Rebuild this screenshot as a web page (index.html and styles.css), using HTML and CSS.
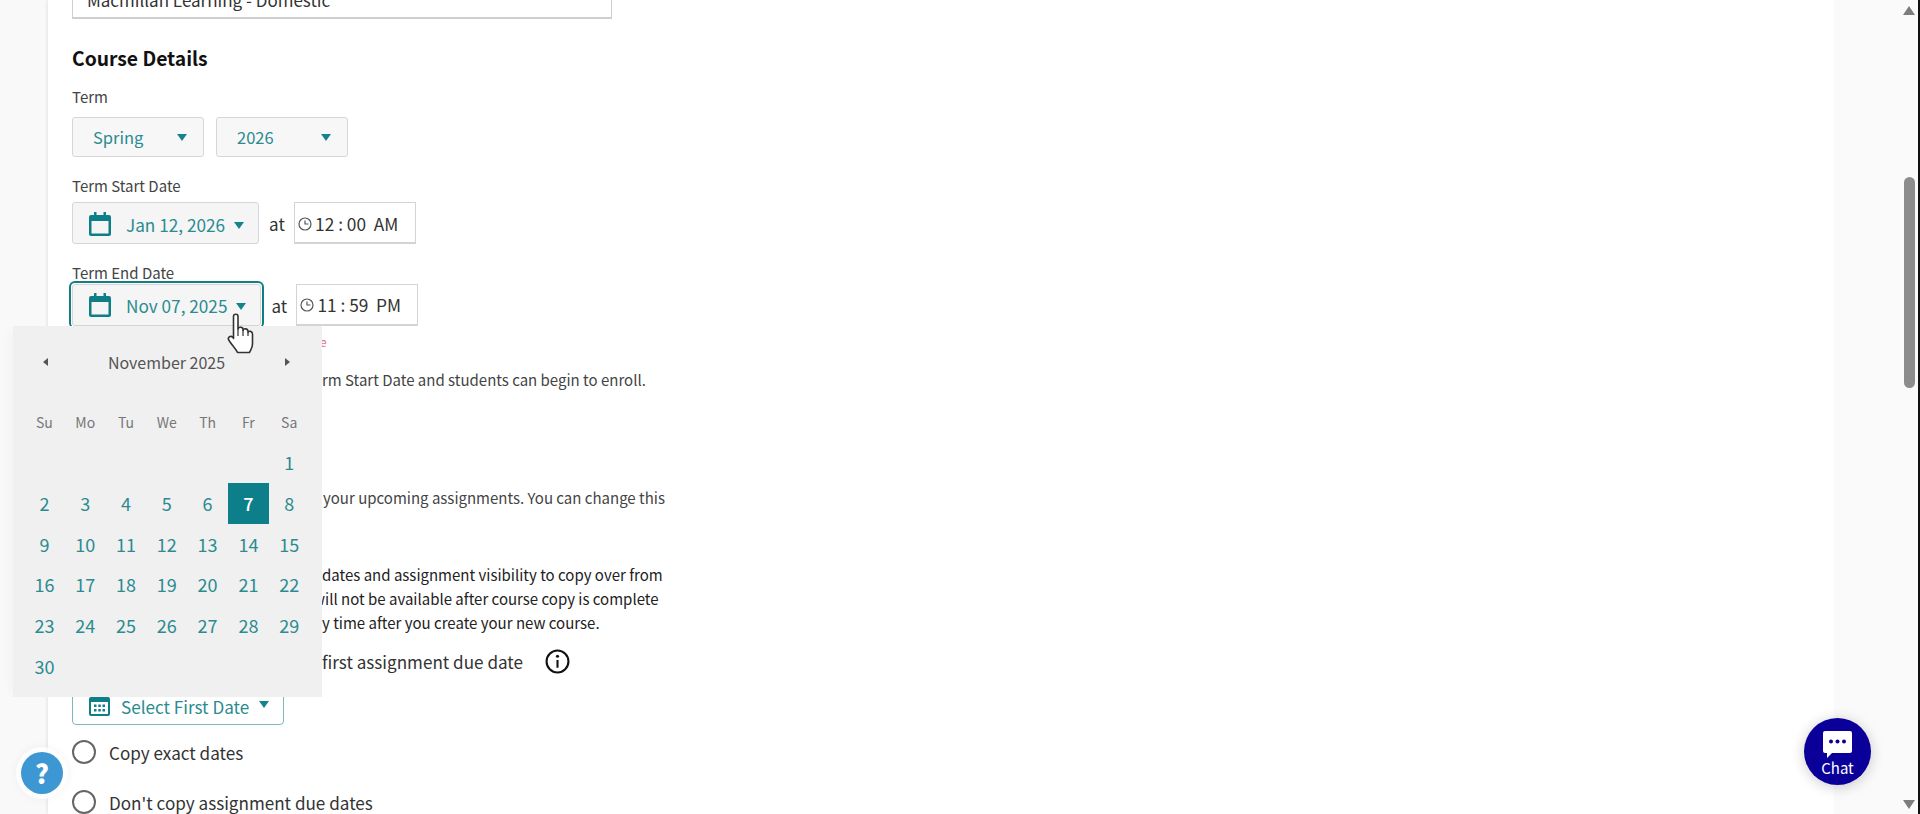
FILE: index.html
```html
<!DOCTYPE html>
<html lang="en">
<head>
    <meta charset="UTF-8">
    <meta name="viewport" content="width=device-width, initial-scale=1.0">
    <title>Create Course</title>
    <link rel="stylesheet" href="styles.css">
</head>
<body>
    <div class="page">
        <main class="panel">
            <div class="text-box">Macmillan Learning - Domestic</div>

            <h2 class="section-title">Course Details</h2>

            <div class="field-label term-label">Term</div>
            <div class="row">
                <button class="select-btn" type="button">Spring <span class="caret"></span></button>
                <button class="select-btn" type="button">2026 <span class="caret"></span></button>
            </div>

            <div class="field-label start-label">Term Start Date</div>
            <div class="row date-row start-row">
                <button class="date-btn" type="button">
                    <svg class="cal-icon" viewBox="0 0 22 24"><path d="M5 0h2.500v3h7V0H17v3h3a2 2 0 0 1 2 2v17a2 2 0 0 1-2 2H2a2 2 0 0 1-2-2V5a2 2 0 0 1 2-2h3zM2.500 9v12.500h17V9z"/></svg>
                    <span class="date-text">Jan 12, 2026</span>
                    <span class="caret"></span>
                </button>
                <span class="at">at</span>
                <div class="time-box">
                    <svg class="clock-icon" viewBox="0 0 14 14"><circle cx="7" cy="7" r="6"/><path d="M7 3.500V7h3.500"/></svg>
                    <span class="time-text">12 : 00&nbsp; AM</span>
                </div>
            </div>

            <div class="field-label end-label">Term End Date</div>
            <div class="row date-row">
                <button class="date-btn is-open" type="button">
                    <svg class="cal-icon" viewBox="0 0 22 24"><path d="M5 0h2.500v3h7V0H17v3h3a2 2 0 0 1 2 2v17a2 2 0 0 1-2 2H2a2 2 0 0 1-2-2V5a2 2 0 0 1 2-2h3zM2.500 9v12.500h17V9z"/></svg>
                    <span class="date-text">Nov 07, 2025</span>
                    <span class="caret"></span>
                </button>
                <span class="at">at</span>
                <div class="time-box">
                    <svg class="clock-icon" viewBox="0 0 14 14"><circle cx="7" cy="7" r="6"/><path d="M7 3.500V7h3.500"/></svg>
                    <span class="time-text">11 : 59&nbsp; PM</span>
                </div>
            </div>

            <!-- these lines run on under the open date picker, only the part right of it shows -->
            <p class="error-text">e</p>
            <p class="note enroll-note">rm Start Date and students can begin to enroll.</p>
            <p class="note reminder-note">your upcoming assignments. You can change this</p>

            <div class="copy-note">
                <p class="copy-line">dates and assignment visibility to copy over from</p>
                <p class="copy-line will-line">will not be available after course copy is complete</p>
                <p class="copy-line">y time after you create your new course.</p>
            </div>

            <div class="radio-row first-date-row">
                <span>first assignment due date</span>
                <svg class="info-icon" viewBox="0 0 24 24"><circle cx="12" cy="12" r="10.500"/><circle class="info-dot" cx="12" cy="7" r="1.500"/><path d="M12 10.500V18"/></svg>
            </div>
            <button class="first-date-btn" type="button">
                <svg class="grid-cal-icon" viewBox="0 0 21 19"><path d="M2 0h17a2 2 0 0 1 2 2v15a2 2 0 0 1-2 2H2a2 2 0 0 1-2-2V2a2 2 0 0 1 2-2zm0 5v12h17V5z"/><path d="M5 7.500h2.500V10H5zM9.300 7.500h2.500V10H9.300zM13.500 7.500H16V10h-2.500zM5 12h2.500v2.500H5zM9.300 12h2.500v2.500H9.300zM13.500 12H16v2.500h-2.500z"/></svg>
                <span>Select First Date</span>
                <span class="caret"></span>
            </button>
            <div class="radio-row exact-row"><span class="radio"></span><span>Copy exact dates</span></div>
            <div class="radio-row none-row"><span class="radio"></span><span>Don't copy assignment due dates</span></div>
        </main>

        <div class="scroll-rail">
            <span class="arrow-up"></span>
            <span class="thumb"></span>
            <span class="arrow-down"></span>
        </div>
    </div>

    <!-- date picker popup -->
    <div class="datepicker">
        <div class="dp-head">
            <span class="dp-prev"></span>
            <span class="dp-month">November 2025</span>
            <span class="dp-next"></span>
        </div>
        <div class="dp-grid dp-week">
            <span>Su</span><span>Mo</span><span>Tu</span><span>We</span><span>Th</span><span>Fr</span><span>Sa</span>
        </div>
        <div class="dp-grid dp-days">
            <span></span><span></span><span></span><span></span><span></span><span></span><span>1</span>
            <span>2</span><span>3</span><span>4</span><span>5</span><span>6</span><span class="dp-selected">7</span><span>8</span>
            <span>9</span><span>10</span><span>11</span><span>12</span><span>13</span><span>14</span><span>15</span>
            <span>16</span><span>17</span><span>18</span><span>19</span><span>20</span><span>21</span><span>22</span>
            <span>23</span><span>24</span><span>25</span><span>26</span><span>27</span><span>28</span><span>29</span>
            <span>30</span>
        </div>
    </div>

    <svg class="hand-cursor" viewBox="0 0 32 42">
        <path d="M8.500 3.500c0-3 4.500-3 4.500 0V16c.5-2.500 5-2.500 5 .5v1c.5-2.500 4.800-2.200 5 .8v1.200c.8-2 4.500-1.500 4.500 1.500V31c0 4-2 6-3 8.500H12.500C11 36 8 33.500 4 27.500c-2-3 1.500-5.500 4-3l.5 1z"/>
        <path class="hand-lines" d="M13 16v7M18 17.500V23M23 19.500V23"/>
    </svg>

    <button class="help-btn" type="button">?</button>

    <button class="chat-btn" type="button">
        <svg class="chat-icon" viewBox="0 0 29 27"><path d="M2 0h25a2 2 0 0 1 2 2v18a2 2 0 0 1-2 2H9l-5 5v-5H2a2 2 0 0 1-2-2V2a2 2 0 0 1 2-2z"/><circle cx="8" cy="10.500" r="2"/><circle cx="14.500" cy="10.500" r="2"/><circle cx="21" cy="10.500" r="2"/></svg>
        <span>Chat</span>
    </button>
</body>
</html>
```

FILE: styles.css
```css
* {
    box-sizing: border-box;
}
html, body {
    margin: 0;
    height: 100%;
    overflow: hidden;
}
body {
    background: #f9f9f9;
    color: #333;
    font-family: "Noto Sans CJK SC", "Source Sans Pro", "Noto Sans", sans-serif;
    font-size: 16px;
}
button {
    font-family: inherit;
}
.page {
    display: flex;
    height: 814px;
    padding-left: 48px;
}
.panel {
    width: 1786px;
    height: 814px;
    flex: none;
    background: #fff;
    padding: 0 0 0 24px;
    box-shadow: 0 0 4px #d8d8d8;
    overflow: hidden;
}
.text-box {
    width: 540px;
    height: 50px;
    margin-top: -31px;
    padding: 18px 14px 0;
    border: 1px solid #cfcfcf;
    border-bottom-width: 2px;
    font-size: 17px;
    line-height: 24px;
}
.section-title {
    margin: 26px 0 0;
    color: #111;
    font-size: 19.300px;
    font-weight: 700;
    line-height: 26px;
}
.field-label {
    color: #444;
    font-size: 15px;
    line-height: 20px;
}
.term-label {
    margin-top: 16px;
}
.start-label {
    margin-top: 19px;
}
.end-label {
    margin-top: 19px;
}
.row {
    display: flex;
    align-items: center;
}
.term-label + .row {
    gap: 12px;
    margin-top: 10px;
}
.date-row {
    margin-top: 6px;
}
.end-label + .date-row {
    margin-top: 1px;
}
.caret {
    display: inline-block;
    flex: none;
    width: 0;
    height: 0;
    border-left: 5.500px solid transparent;
    border-right: 5.500px solid transparent;
    border-top: 7px solid #14848c;
}
.select-btn {
    display: flex;
    align-items: center;
    justify-content: space-between;
    width: 132px;
    height: 40px;
    padding: 0 16px 0 20px;
    background: #f7f7f8;
    border: 1px solid #d6d6d8;
    border-radius: 3px;
    color: #2b8b90;
    font-size: 16.500px;
}
.date-btn {
    display: flex;
    align-items: center;
    height: 42px;
    padding: 0 14px 0 16px;
    background: #f5f5f6;
    border: 1px solid #d6d6d8;
    border-radius: 3px;
    color: #2b8b90;
    font-size: 17.200px;
}
.date-btn .caret {
    margin-top: 3px;
}
.start-row .date-btn,
.start-row .time-box {
    padding-top: 2px;
}
.date-btn.is-open {
    outline: 2px solid #0f7f87;
    outline-offset: 1px;
}
.cal-icon {
    flex: none;
    width: 22px;
    height: 24px;
    margin-right: 15px;
    fill: #0f7f87;
}
.date-text {
    margin-right: 9px;
    white-space: nowrap;
}
.at {
    width: 35px;
    padding-left: 10px;
    color: #333;
    font-size: 17px;
}
.time-box {
    display: flex;
    align-items: center;
    width: 122px;
    height: 42px;
    padding-left: 3px;
    background: #fff;
    border: 1px solid #d4d4d4;
    border-bottom-width: 2px;
}
.clock-icon {
    width: 14px;
    height: 14px;
    margin-right: 3px;
    fill: none;
    stroke: #555;
    stroke-width: 1.200;
}
.time-text {
    color: #333;
    font-size: 17.300px;
    white-space: nowrap;
}
.error-text {
    margin: 8px 0 0;
    padding-left: 248px;
    color: #dc6d92;
    font-size: 12px;
    line-height: 16px;
}
.note {
    margin: 0;
    padding-left: 250px;
    color: #444;
    font-size: 15px;
    line-height: 20px;
}
.enroll-note {
    margin-top: 20px;
}
.reminder-note {
    margin-top: 98px;
    padding-left: 251px;
}
.copy-note {
    margin-top: 55px;
    color: #222;
    font-size: 15px;
    line-height: 24px;
}
.copy-line {
    margin: 0;
    padding-left: 250px;
}
.copy-line.will-line {
    padding-left: 241px;
}
.radio-row {
    display: flex;
    align-items: center;
    height: 24px;
    color: #333;
    font-size: 17.100px;
}
.radio {
    flex: none;
    width: 24px;
    height: 24px;
    margin-right: 13px;
    background: #fff;
    border: 2px solid #666;
    border-radius: 50%;
}
.first-date-row {
    margin-top: 14px;
    padding-left: 250px;
}
.exact-row {
    margin-top: 15px;
}
.none-row {
    margin-top: 26px;
}
.info-icon {
    width: 25px;
    height: 25px;
    margin-left: 22px;
    fill: none;
    stroke: #111;
    stroke-width: 2;
}
.info-dot {
    fill: #111;
    stroke: none;
}
.first-date-btn {
    display: flex;
    align-items: center;
    width: 212px;
    height: 42px;
    margin-top: 10px;
    padding: 5px 0 0 16px;
    background: #fff;
    border: 1px solid #7fb8bc;
    border-radius: 4px;
    color: #2b8b90;
    font-size: 17.100px;
    white-space: nowrap;
}
.grid-cal-icon {
    flex: none;
    width: 21px;
    height: 19px;
    margin-right: 11px;
    fill: #0f7f87;
}
.first-date-btn .caret {
    margin-left: 10px;
    margin-top: -5px;
}
.scroll-rail {
    position: relative;
    flex: 1;
    border-right: 2px solid #111;
    background: #fafafa;
}
.thumb {
    position: absolute;
    top: 177px;
    right: 3px;
    width: 11px;
    height: 211px;
    background: #8c8c8c;
    border-radius: 6px;
}
.arrow-up,
.arrow-down {
    position: absolute;
    right: 3px;
    width: 0;
    height: 0;
    border-left: 6px solid transparent;
    border-right: 6px solid transparent;
}
.arrow-up {
    top: 6px;
    border-bottom: 9px solid #7d7d7d;
}
.arrow-down {
    top: 800px;
    border-top: 9px solid #7d7d7d;
}
.datepicker {
    position: absolute;
    top: 326px;
    left: 13px;
    width: 309px;
    height: 371px;
    background: #f0f0f1;
    box-shadow: -8px 0 10px -5px rgba(0, 0, 0, 0.03);
}
.dp-head {
    display: flex;
    align-items: center;
    justify-content: space-between;
    height: 72px;
    padding: 0 32px 0 30px;
}
.dp-month {
    color: #555;
    font-size: 16px;
}
.dp-prev,
.dp-next {
    width: 0;
    height: 0;
    border-top: 4.500px solid transparent;
    border-bottom: 4.500px solid transparent;
}
.dp-prev {
    border-right: 5px solid #555;
}
.dp-next {
    border-left: 5px solid #555;
}
.dp-grid {
    display: grid;
    grid-template-columns: repeat(7, 40.800px);
    padding-left: 11px;
    text-align: center;
}
.dp-week {
    height: 44px;
    color: #777;
    font-size: 14px;
    line-height: 48px;
}
.dp-days {
    grid-auto-rows: 40.800px;
    color: #2b8b90;
    font-size: 18px;
    line-height: 40.800px;
}
.dp-selected {
    background: #0d7f8a;
    color: #fff;
    font-weight: 500;
}
.hand-cursor {
    position: absolute;
    top: 313px;
    left: 225px;
    width: 32px;
    height: 42px;
    fill: #fff;
    stroke: #333;
    stroke-width: 1.600;
    stroke-linejoin: round;
}
.hand-lines {
    fill: none;
    stroke-width: 1.200;
}
.help-btn {
    position: absolute;
    top: 752px;
    left: 21px;
    width: 42px;
    height: 42px;
    padding: 0;
    background: #3d97d3;
    border: 0;
    border-radius: 50%;
    box-shadow: 0 0 0 5px rgba(255, 255, 255, 0.8), 0 0 8px 6px rgba(0, 0, 0, 0.04);
    color: #fff;
    font-size: 26px;
    font-weight: 900;
    line-height: 42px;
}
.chat-btn {
    position: absolute;
    top: 718px;
    left: 1804px;
    display: flex;
    flex-direction: column;
    align-items: center;
    width: 67px;
    height: 67px;
    padding: 13px 0 0;
    background: #0a0099;
    border: 0;
    border-radius: 50%;
    box-shadow: 0 2px 14px rgba(0, 0, 0, 0.2);
    color: #fff;
    font-size: 15px;
    line-height: 18px;
}
.chat-icon {
    flex: none;
    width: 29px;
    height: 27px;
    margin-bottom: 1px;
    fill: #fff;
}
.chat-icon circle {
    fill: #0a0099;
}
```
